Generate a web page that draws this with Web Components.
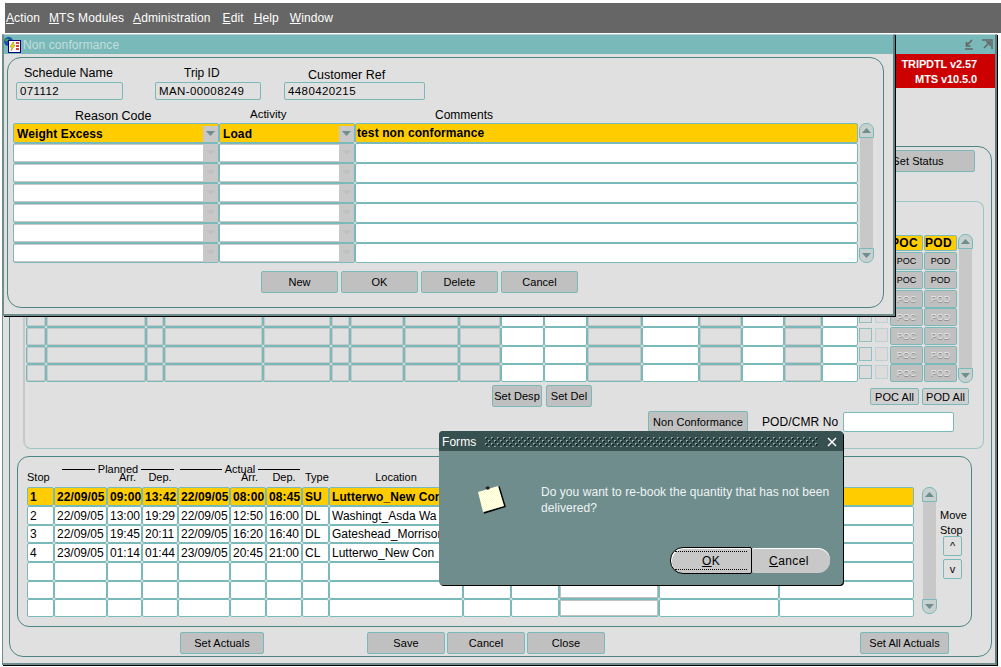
<!DOCTYPE html>
<html lang="en"><head><meta charset="utf-8"><title>Trip detail</title>
<style>
html,body{margin:0;padding:0;background:#fff;overflow:hidden}
body{font:12px "Liberation Sans",Arial,sans-serif;color:#000}
</style></head><body>
<x-desktop>
  <x-menubar></x-menubar>
  <x-main-window></x-main-window>
  <x-conf-window></x-conf-window>
  <x-alert></x-alert>
</x-desktop>
<script>
const el=(name,fn)=>customElements.define(name,fn);
const mk=(host,css,html)=>{const r=host.attachShadow({mode:'open'});r.innerHTML=`<style>${css}</style>${html}`;return r;};

el('x-desktop',class extends HTMLElement{constructor(){super();mk(this,`
:host{display:block;position:relative;width:1001px;height:667px;background:#fff;overflow:hidden;padding-top:3px;box-sizing:border-box}
`,`<slot></slot>`);}});

el('x-menubar',class extends HTMLElement{constructor(){super();
const items=[['A','ction',1],['M','TS Modules',9],['A','dministration',9],['E','dit',12],['H','elp',10],['W','indow',11]];
mk(this,`
:host{display:flex;align-items:center;height:30px;margin-left:5px;background:#666;color:#fff;font:12px "Liberation Sans",sans-serif;letter-spacing:.1px}
span{white-space:nowrap} u{text-underline-offset:1px}
`,items.map(i=>`<span style="margin-left:${i[2]}px"><u>${i[0]}</u>${i[1]}</span>`).join(''));}});

el('x-window',class extends HTMLElement{constructor(){super();
mk(this,`
:host{display:block;position:absolute;box-sizing:border-box;background:#e0e0e0;border:1px solid #6f8d8d;border-top:1px solid #b8d4d4;border-right:2px solid #5f7d7d;border-bottom:2px solid #6f8d8d;box-shadow:1px 1px 0 #000}
.t{display:flex;align-items:center;height:19px;background:#7ab9b9;color:#c4dede;font:12px "Liberation Sans",sans-serif;letter-spacing:.1px}
`,`<div class="t"><slot name="title"></slot></div><slot></slot>`);}});

el('x-panel',class extends HTMLElement{constructor(){super();mk(this,`
:host{display:block;box-sizing:border-box;border:1px solid var(--line,#4f8484);border-radius:var(--rad,12px)}
`,`<slot></slot>`);}});

el('x-btn',class extends HTMLElement{constructor(){super();mk(this,`
:host{display:flex;align-items:center;justify-content:center;box-sizing:border-box;height:22px;background:#c0c0c0;border:1px solid #7ab9b9;border-radius:2px;font:11px "Liberation Sans",sans-serif;letter-spacing:.05px;color:#000;white-space:nowrap;overflow:hidden}
:host([small]){font-size:9px}
:host([off]){color:#e8e8e8;text-shadow:0 1px 0 #8a8a8a;font-size:9px}
`,`<slot></slot>`);}});

el('x-scroll',class extends HTMLElement{constructor(){super();
const tri=d=>`<svg width="11" height="7" viewBox="0 0 11 7"><path d="${d}" fill="#6f8d8d"/></svg>`;
mk(this,`
:host{display:flex;flex-direction:column;align-items:center;box-sizing:border-box;width:15px;height:100%}
.b{flex:none;width:15px;height:15px;box-sizing:border-box;border:1px solid #7ab9b9;background:#c8d0d0;display:flex;align-items:center;justify-content:center}
.u{border-radius:7px 7px 0 0}.d{border-radius:0 0 7px 7px}
.tr{flex:1;width:13px;background:#c8c8c8}
`,`<div class="b u">${tri('M5.5 1 10 6H1z')}</div><div class="tr"></div><div class="b d">${tri('M1 1h9L5.5 6z')}</div>`);}});

el('x-cell',class extends HTMLElement{constructor(){super();
const combo=this.hasAttribute('combo');
mk(this,`
:host{display:flex;align-items:center;box-sizing:border-box;min-width:0;overflow:hidden;background:#fff;border:1px solid #7ab9b9;border-radius:2px;font:12px "Liberation Sans",sans-serif;color:#000;white-space:nowrap;padding-left:2px}
:host([kind=cur]){background:#fc0;font-weight:bold;letter-spacing:.1px}
:host([kind=gray]){background:#e0e0e0;box-shadow:inset 0 0 0 1px #c8c8c8}
:host([kind=soft]){box-shadow:inset 0 1px 0 #c8c8c8,inset 0 -1px 0 #c8c8c8}
:host([kind=dbl]){box-shadow:inset 0 0 0 1px #c0c0c0}
.t{flex:1;min-width:0;overflow:hidden}
.c{flex:none;width:15px;align-self:stretch;background:#c8c8c8;display:flex;align-items:center;justify-content:center}
path{fill:#bcc2c2}
:host([kind=cur]) path{fill:#6f8d8d}
`,`<span class="t"><slot></slot></span>${combo?`<span class="c"><svg width="11" height="6" viewBox="0 0 11 6"><path d="M1 0h9L5.5 5z"/></svg></span>`:''}`);}});

el('x-grid',class extends HTMLElement{constructor(){super();mk(this,`
:host{display:grid;grid-template-columns:var(--cols);grid-template-rows:var(--rows)}
`,`<slot></slot>`);}});

/* ---------- main window ---------- */
el('x-main-window',class extends HTMLElement{constructor(){super();
const dCols=[20,100,18,99,68,19,54,55,42,43,43,55,57,43,42,38,36];
const whiteCols=[9,10,12,14,16];
let dGrid=`<div class="hdspan"></div><x-cell kind="cur" class="poh">POC</x-cell><x-cell kind="cur" class="poh">POD</x-cell>`;
for(let r=0;r<7;r++){
  dCols.forEach((w,i)=>{dGrid+=`<x-cell kind="${whiteCols.includes(i)?'white':'gray'}"></x-cell>`;});
  const off=r>=2?' off':' small';
  dGrid+=`<div class="ck a"></div><div class="ck b"></div><x-btn class="pb"${off}>POC</x-btn><x-btn class="pb"${off}>POD</x-btn>`;
}
const stops=[
 ['1','22/09/05','09:00','13:42','22/09/05','08:00','08:45','SU','Lutterwo_New Con'],
 ['2','22/09/05','13:00','19:29','22/09/05','12:50','16:00','DL','Washingt_Asda Wa'],
 ['3','22/09/05','19:45','20:11','22/09/05','16:20','16:40','DL','Gateshead_Morrison'],
 ['4','23/09/05','01:14','01:44','23/09/05','20:45','21:00','CL','Lutterwo_New Con'],
 ['','','','','','','','',''],['','','','','','','','',''],['','','','','','','','','']];
let sGrid='';
stops.forEach((row,r)=>{
  const k=r==0?'cur':'white';
  row.forEach(t=>{sGrid+=`<x-cell kind="${k}">${t}</x-cell>`;});
  for(let j=0;j<5;j++) sGrid+=`<x-cell kind="${r==0?'cur':(j==2?'dbl':'white')}"></x-cell>`;
});
mk(this,`
:host{display:block;position:absolute;left:2px;top:34px;width:995px;height:631px}
.wi{display:flex;gap:7px;margin-left:auto;margin-right:2px}
.head{display:flex;justify-content:flex-end;height:92px}
.red{width:100px;height:34px;background:#c00;color:#fff;font:bold 11px "Liberation Sans",sans-serif;letter-spacing:-.1px;text-align:right;line-height:15px;padding:3px 18px 0 0;box-sizing:border-box;white-space:nowrap}
.outer{margin:0 3px 0 6px;height:511px;padding-top:3px;--rad:14px}
.ssr{display:flex;justify-content:flex-end;padding-right:16px}
.ss{width:114px}
.detail{margin:29px 0 0 13px;width:961px;height:248px;padding:32px 0 0 1px;--line:#9cc6c6;--rad:8px;border-left:2px solid #c4caca}
.dw{display:flex;height:149px}
x-grid.d{--cols:${dCols.map(v=>v+'px').join(' ')} 17px 14px 34px 34px;--rows:18px 19px 19px 18px 19px 19px 18px 18px;height:149px}
.hdspan{grid-column:1 / 20}
.poh{height:16px;margin:1px 0 0 1px;justify-content:center;padding:0;letter-spacing:.3px}
.ck{box-sizing:border-box;width:13px;height:14px;background:#dcdcdc;margin-top:1px}
.ck.a{border:1px solid #8fc0c0;margin-left:1px}
.ck.b{border:1px solid #bfd0d0}
.pb{height:18px;margin-left:1px;font-size:9px}
.r1{display:flex;margin-top:2px;padding-left:466px}
.sd{width:50px;margin-right:4px}.sl{width:46px}
.pa{height:17px;margin-top:3px;width:49px;background:#d0d0d0}
.pa.f{margin-left:278px}.pa.s{margin-left:3px;width:47px}
.r2{display:flex;align-items:center;margin-top:4px;padding-left:622px}
.nc{width:100px;height:21px}
.lb{margin-left:14px;width:81px;font:12px "Liberation Sans",sans-serif;letter-spacing:.1px;white-space:nowrap}
.pi{width:111px;height:20px;box-sizing:border-box;background:#fff;border:1px solid #7ab9b9;border-radius:2px}
.lower{margin:7px 0 0 7px;width:955px;height:171px;padding:5px 0 0 9px;--rad:12px}
x-grid.h{--cols:27px 53px 35px 36px 52px 36px 36px 27px 133px;--rows:8px 17px;height:25px;font:11px "Liberation Sans",sans-serif}
.grp{display:flex;align-items:center;gap:3px;white-space:nowrap;height:14px}
.grp i{display:block;height:1px;background:#000;flex:1}
.lab{display:flex;align-items:center;white-space:nowrap;padding-bottom:3px;box-sizing:border-box}
.ctr{justify-content:center}
.arr1{justify-content:flex-end;padding-right:6px}.arr2{justify-content:flex-end;padding-right:8px}
.typ{padding-left:3px}.loc{justify-content:center;padding-left:1px}
.lw{display:flex;height:127px}
x-grid.s{--cols:27px 53px 35px 36px 52px 36px 36px 27px 134px 48px 48px 100px 120px 135px;--rows:19px 19px 18px 19px 19px 18px 18px;height:130px;width:887px;flex:none}
.lw x-scroll{margin-left:8px}
.side{margin-left:3px;font:11px/15px "Liberation Sans",sans-serif;padding-top:21px;width:30px}
.mv{width:19px;height:20px;margin:-2px 0 5px 3px;font-size:11px;background:#e0e0e0}
.bot{display:flex;margin-top:5px;padding-left:170px}
.b1{width:84px}.b2{width:78px}.b3{width:89px}
`,`<x-window style="inset:0">
<div slot="title" class="wi">
 <svg width="10" height="11" viewBox="0 0 10 11"><path d="M1 10h8M8 1 3 6M2.500 3v4h4" fill="none" stroke="#666" stroke-width="1.700"/></svg>
 <svg width="12" height="11" viewBox="0 0 12 11"><path d="M1 1h10v9M3 9l6-6M5 3h4v4" fill="none" stroke="#666" stroke-width="1.500"/></svg>
</div>
<div class="head"><div class="red">TRIPDTL v2.57<br>MTS v10.5.0</div></div>
<x-panel class="outer">
  <div class="ssr"><x-btn class="ss">Set Status</x-btn></div>
  <x-panel class="detail">
    <div class="dw"><x-grid class="d">${dGrid}</x-grid><x-scroll style="margin-left:1px"></x-scroll></div>
    <div class="r1"><x-btn class="sd">Set Desp</x-btn><x-btn class="sl">Set Del</x-btn><x-btn class="pa f">POC All</x-btn><x-btn class="pa s">POD All</x-btn></div>
    <div class="r2"><x-btn class="nc">Non Conformance</x-btn><span class="lb">POD/CMR No</span><div class="pi"></div></div>
  </x-panel>
  <x-panel class="lower">
    <x-grid class="h">
      <div style="grid-column:1"></div>
      <div class="grp" style="grid-column:2 / 5;padding:0 4px 0 8px"><i></i>Planned<i></i></div>
      <div class="grp" style="grid-column:5 / 8;padding:0 2px 0 2px"><i></i>Actual<i></i></div>
      <div style="grid-column:8 / 10"></div>
      <div class="lab">Stop</div><div></div>
      <div class="lab arr1">Arr.</div><div class="lab ctr">Dep.</div><div></div>
      <div class="lab arr2">Arr.</div><div class="lab ctr">Dep.</div><div class="lab typ">Type</div><div class="lab loc">Location</div>
    </x-grid>
    <div class="lw">
      <x-grid class="s">${sGrid}</x-grid>
      <x-scroll></x-scroll>
      <div class="side">Move<br>Stop<x-btn class="mv">^</x-btn><x-btn class="mv">v</x-btn></div>
    </div>
  </x-panel>
  <div class="bot">
    <x-btn class="b1">Set Actuals</x-btn>
    <x-btn class="b2" style="margin-left:103px">Save</x-btn><x-btn class="b2" style="margin-left:2px">Cancel</x-btn><x-btn class="b2" style="margin-left:2px">Close</x-btn>
    <x-btn class="b3" style="margin-left:255px">Set All Actuals</x-btn>
  </div>
</x-panel>
</x-window>`);}});

/* ---------- non-conformance window ---------- */
el('x-conf-window',class extends HTMLElement{constructor(){super();
let rows=`<x-cell kind="cur" combo class="wt">Weight Excess</x-cell><x-cell kind="cur" combo class="wt">Load</x-cell><x-cell kind="cur" class="cm">test non conformance</x-cell>`;
for(let i=0;i<6;i++) rows+=`<x-cell kind="soft" combo></x-cell><x-cell kind="soft" combo></x-cell><x-cell></x-cell>`;
mk(this,`
:host{display:block;position:absolute;left:3px;top:34px;width:892px;height:282px}
.ti{display:flex;align-items:center;gap:1px;color:#c4dede;white-space:nowrap}
.p{margin:3px 9px 0 3px;height:251px;padding:0 0 0 5px;--rad:14px;box-sizing:border-box}
.lbls{display:grid;grid-template-columns:107px 32px 106px 23px 141px;height:24px;font:12.500px "Liberation Sans",sans-serif;align-items:end;padding-left:3px}
.f{display:grid;grid-template-columns:107px 32px 106px 23px 141px;height:18px;padding-left:3px}
.f x-cell{font-size:11.500px;letter-spacing:.4px;background:#e0e0e0;padding-left:3px;box-shadow:none}
.l1{padding-left:8px;padding-bottom:2px;white-space:nowrap}
.l2{padding-left:29px;padding-bottom:2px;font-size:12px}
.l3{padding-left:24px;white-space:nowrap}
.hd{display:grid;grid-template-columns:206px 136px 503px;height:23px;align-items:end;font:12.500px/15px "Liberation Sans",sans-serif;white-space:nowrap}
.hd span:nth-child(1){padding-left:62px;margin-bottom:-1px}
.hd span:nth-child(2){padding-left:31px;font-size:11.500px;padding-bottom:1px}
.hd span:nth-child(3){padding-left:80px;font-size:12px}
.tb{display:flex;height:140px}
x-grid.t{--cols:206px 136px 503px;--rows:repeat(7,20px);width:845px;flex:none}
.wt{padding:2px 0 0 3px}
.cm{padding-left:1px}
x-scroll{margin-left:1px}
.bt{display:flex;gap:3px;padding-left:248px;margin-top:8px}
.bt x-btn{width:77px}
`,`<x-window style="inset:0">
<div slot="title" class="ti"><svg width="18" height="19" viewBox="0 0 18 19">
 <circle cx="4.500" cy="6.500" r="4.500" fill="#1a4fb0"/><path d="M1.500 4c2-1 3 0 4 1-1 1-3 2-5 1z" fill="#3fa04a"/>
 <rect x="4.500" y="5.500" width="12" height="12" fill="#fff" stroke="#000080"/>
 <path d="M9 7 6 12h2l-1 4 4-6H9l1-3z" fill="#f6d800" stroke="#806000" stroke-width=".4"/>
 <path d="M12 8h3M12 11h3M12 14h3" stroke="#d00000" stroke-width="1.500"/></svg>Non conformance</div>
<x-panel class="p">
  <div class="lbls"><span class="l1">Schedule Name</span><span></span><span class="l2">Trip ID</span><span></span><span class="l3">Customer Ref</span></div>
  <div class="f"><x-cell kind="gray">071112</x-cell><span></span><x-cell kind="gray">MAN-00008249</x-cell><span></span><x-cell kind="gray">4480420215</x-cell></div>
  <div class="hd"><span>Reason Code</span><span>Activity</span><span>Comments</span></div>
  <div class="tb"><x-grid class="t">${rows}</x-grid><x-scroll></x-scroll></div>
  <div class="bt"><x-btn>New</x-btn><x-btn>OK</x-btn><x-btn>Delete</x-btn><x-btn>Cancel</x-btn></div>
</x-panel>
</x-window>`);}});

/* ---------- alert ---------- */
el('x-alert',class extends HTMLElement{constructor(){super();
const dot=(c,x,y)=>`radial-gradient(circle at .75px .75px,${c} 0 .75px,transparent 1px) ${x}px ${y}px/6px 6px`;
mk(this,`
:host{display:block;position:absolute;left:439px;top:431px;width:404px;height:154px;box-sizing:border-box;background:#6f8d8d;border-radius:4px;box-shadow:1px 1px 0 #000;color:#eef4f4;font:12px "Liberation Sans",sans-serif;letter-spacing:.05px;overflow:hidden}
.t{display:flex;align-items:center;height:20px;background:#375050;padding:1px 4px 0 3px;box-sizing:border-box;color:#fff}
.dots{flex:1;height:10px;margin:0 8px 0 9px;background:${dot('#8fabab',0,0)},${dot('#101c1c',1,1)},${dot('#8fabab',3,3)},${dot('#101c1c',4,4)}}
.x{flex:none;width:12px;height:12px;margin-right:1px}
.m{display:flex;height:96px}
.ic{flex:none;margin:24px 0 0 31px;width:40px;height:40px}
.msg{margin:33px 0 0 31px;width:296px;line-height:16px}
.act{display:flex;justify-content:flex-end;align-items:center;padding-right:13px;height:27px;color:#000}
.ok,.ca{display:flex;align-items:center;justify-content:center;box-sizing:border-box;height:27px;background:#c8c8c8;font-size:12px;letter-spacing:.4px}
.ok{width:82px;border:1px solid #000;border-radius:13px 2px 2px 13px;box-shadow:inset 1px 1px 0 #fff}
.ok b{font-weight:normal;display:flex;align-items:center;justify-content:center;width:72px;height:19px;border-top:1px dotted #000;border-bottom:1px dotted #000;box-sizing:border-box}
.ca{width:78px;height:25px;border-radius:2px 12px 12px 2px;box-shadow:inset 0 1px 0 #fff;padding-right:4px}
`,`<div class="t"><span>Forms</span><div class="dots"></div>
<svg class="x" viewBox="0 0 12 12"><path d="M2 2l8 8M10 2l-8 8" stroke="#fff" stroke-width="1.500"/></svg></div>
<div class="m"><svg class="ic" viewBox="0 0 40 40">
<defs><pattern id="chk" width="2" height="2" patternUnits="userSpaceOnUse"><rect width="2" height="2" fill="#ffffb8"/><rect width="1" height="1" fill="#fff"/><rect x="1" y="1" width="1" height="1" fill="#fff"/></pattern></defs>
<path d="M14 38 35 31.500 29 11.500" fill="none" stroke="#000" stroke-width="1.500"/>
<path d="M8 17 28 11l6 20-21 6z" fill="url(#chk)"/>
<path d="M15 13l3-2 2 2-2 2z" fill="#222"/></svg>
<div class="msg">Do you want to re-book the quantity that has not been delivered?</div></div>
<div class="act"><div class="ok"><b><span><u>O</u>K</span></b></div><div class="ca"><span><u>C</u>ancel</span></div></div>`);}});
</script>
</body></html>
